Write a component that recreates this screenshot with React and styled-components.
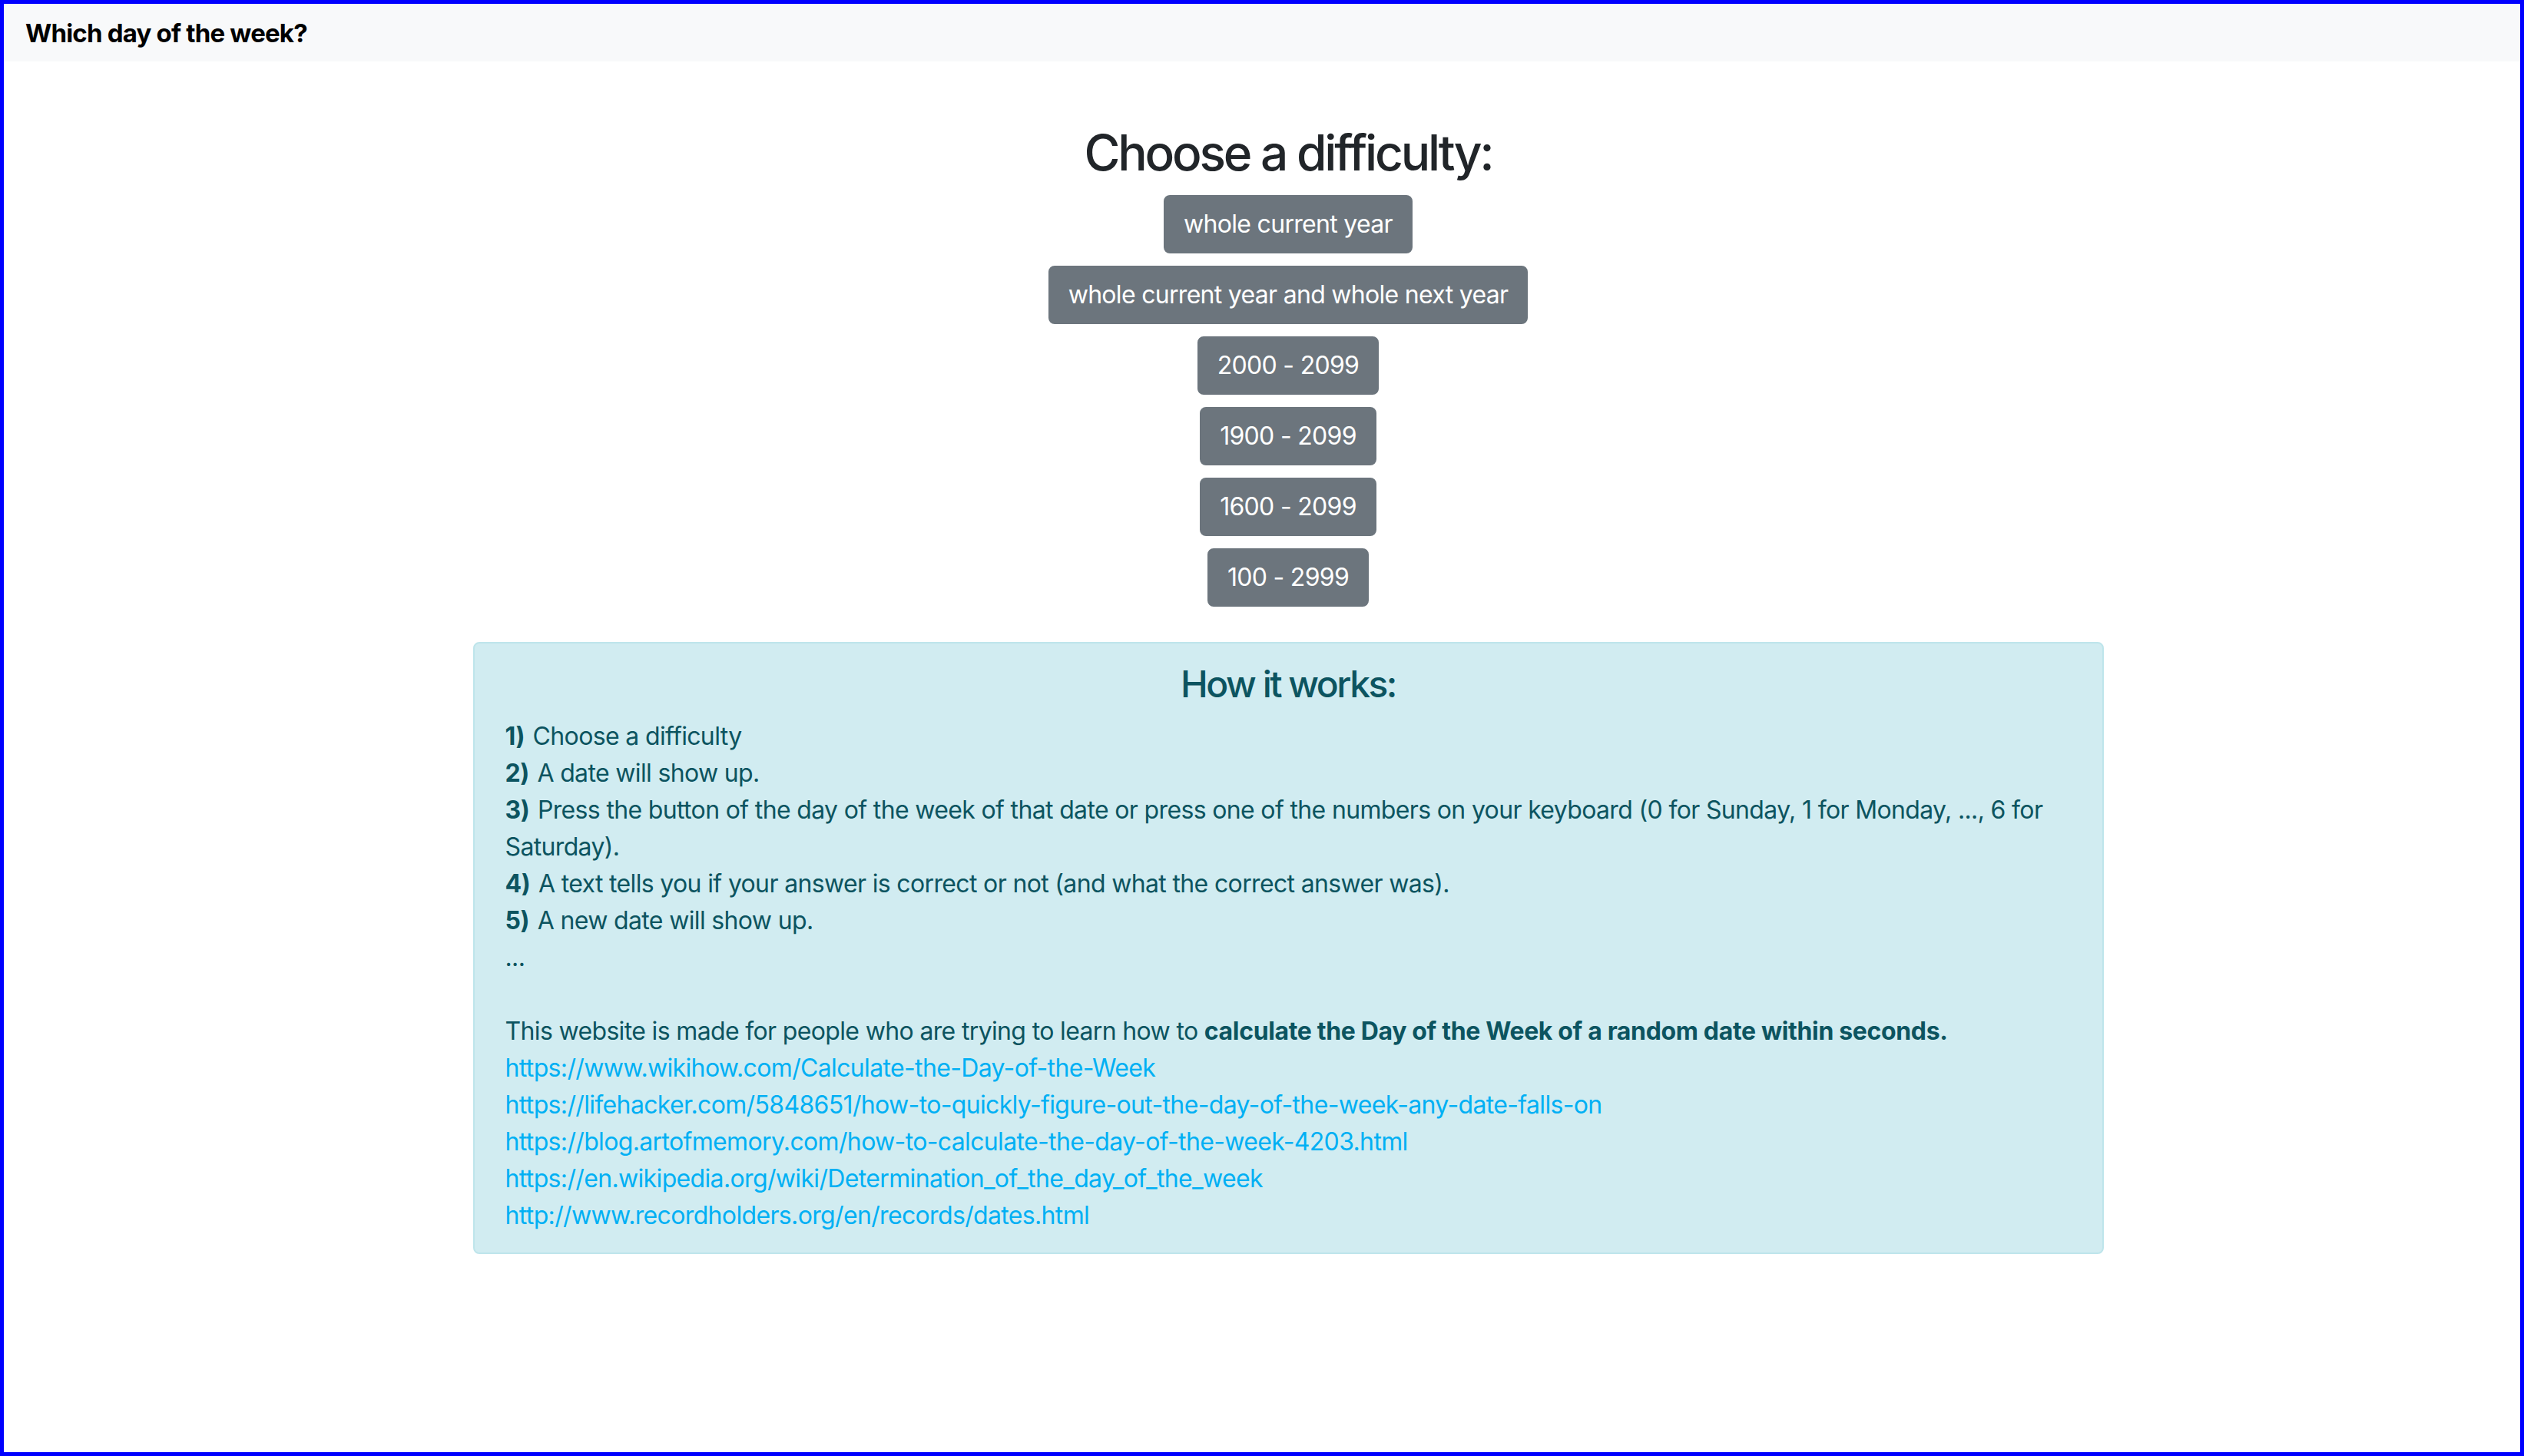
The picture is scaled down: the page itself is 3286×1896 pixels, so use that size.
import React from "react";
import styled, { createGlobalStyle } from "styled-components";

const GlobalStyle = createGlobalStyle`
  html, body {
    margin: 0;
    padding: 0;
    background: #fff;
  }
  body {
    font-family: Inter, "Noto Sans", "Liberation Sans", sans-serif;
    color: #212529;
  }
  * {
    box-sizing: border-box;
  }
`;

const Frame = styled.div`
  height: 100vh;
  border: 5px solid #0000ff;
  display: flex;
  flex-direction: column;
  overflow: hidden;
`;

const NavBar = styled.nav`
  height: 75px;
  flex: none;
  background: #f8f9fa;
  display: flex;
  align-items: center;
  padding-left: 28px;
`;

const Brand = styled.div`
  font-size: 33px;
  font-weight: 700;
  letter-spacing: -0.8px;
  color: #000;
`;

const Main = styled.main`
  padding: 81px 0 0 68px;
`;

const Container = styled.div`
  width: 2123px;
  margin: 0 auto;
  display: flex;
  flex-direction: column;
  align-items: center;
`;

const Title = styled.h2`
  margin: 0 0 16px;
  font-size: 64px;
  font-weight: 500;
  line-height: 1.2;
  letter-spacing: -3.2px;
  color: #212529;
`;

const ButtonList = styled.div`
  display: flex;
  flex-direction: column;
  align-items: center;
  gap: 16px;
`;

const DifficultyButton = styled.button`
  font-family: inherit;
  font-size: 32px;
  line-height: 48px;
  letter-spacing: -0.7px;
  padding: 12px 24px;
  color: #fff;
  background: #6c757d;
  border: 2px solid #6c757d;
  border-radius: 8px;
  cursor: pointer;
`;

const InfoBox = styled.div`
  align-self: stretch;
  margin-top: 46px;
  padding: 24px 40px;
  background: #d1ecf1;
  border: 2px solid #bee5eb;
  border-radius: 8px;
  color: #0c5460;
  font-size: 32px;
  line-height: 48px;
  letter-spacing: -0.65px;
`;

const BoxHeading = styled.h4`
  margin: 0 0 16px;
  text-align: center;
  font-size: 48px;
  font-weight: 500;
  line-height: 1.2;
  letter-spacing: -2.5px;
`;

const Line = styled.div`
  min-height: 48px;
`;

const Strong = styled.b`
  font-weight: 700;
  letter-spacing: -0.35px;
  margin-right: 2px;
`;

const Link = styled.a`
  display: block;
  color: #00b0f4;
  text-decoration: none;
`;

const difficulties = [
  "whole current year",
  "whole current year and whole next year",
  "2000 - 2099",
  "1900 - 2099",
  "1600 - 2099",
  "100 - 2999",
];

const steps = [
  "Choose a difficulty",
  "A date will show up.",
  "Press the button of the day of the week of that date or press one of the numbers on your keyboard (0 for Sunday, 1 for Monday, ..., 6 for Saturday).",
  "A text tells you if your answer is correct or not (and what the correct answer was).",
  "A new date will show up.",
];

const links = [
  "https://www.wikihow.com/Calculate-the-Day-of-the-Week",
  "https://lifehacker.com/5848651/how-to-quickly-figure-out-the-day-of-the-week-any-date-falls-on",
  "https://blog.artofmemory.com/how-to-calculate-the-day-of-the-week-4203.html",
  "https://en.wikipedia.org/wiki/Determination_of_the_day_of_the_week",
  "http://www.recordholders.org/en/records/dates.html",
];

const App = () => {
  return (
    <>
      <GlobalStyle />
      <Frame>
        <NavBar>
          <Brand>Which day of the week?</Brand>
        </NavBar>
        <Main>
          <Container>
            <Title>Choose a difficulty:</Title>
            <ButtonList>
              {difficulties.map((d) => (
                <DifficultyButton key={d}>{d}</DifficultyButton>
              ))}
            </ButtonList>
            <InfoBox>
              <BoxHeading>How it works:</BoxHeading>
              {steps.map((s, i) => (
                <Line key={i}>
                  <Strong>{i + 1})</Strong> {s}
                </Line>
              ))}
              <Line>...</Line>
              <Line />
              <Line>
                This website is made for people who are trying to learn how to{" "}
                <Strong>calculate the Day of the Week of a random date within seconds.</Strong>
              </Line>
              {links.map((l) => (
                <Link key={l} href={l}>
                  {l}
                </Link>
              ))}
            </InfoBox>
          </Container>
        </Main>
      </Frame>
    </>
  );
};

export default App;
